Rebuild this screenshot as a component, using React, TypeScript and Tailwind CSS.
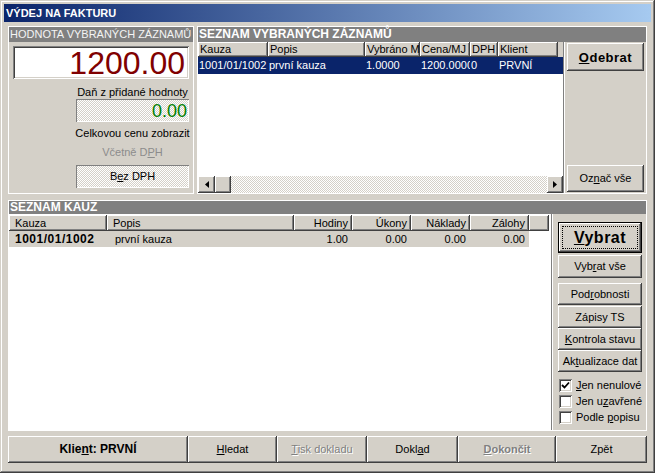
import React from 'react';

const RAISED = 'shadow-[inset_-1px_-1px_#404040,inset_1px_1px_#ffffff,inset_-2px_-2px_#808080,inset_2px_2px_#d4d0c8]';
const HEADCELL = 'shadow-[inset_-1px_-1px_#404040,inset_1px_1px_#ffffff,inset_-2px_-2px_#808080]';
const SUNKEN = 'shadow-[inset_1px_1px_#808080,inset_-1px_-1px_#ffffff,inset_2px_2px_#404040,inset_-2px_-2px_#d4d0c8]';
const THIN_SUNKEN = 'shadow-[inset_1px_1px_#808080,inset_-1px_-1px_#ffffff]';
const DITHER = 'bg-[image:repeating-conic-gradient(#ffffff_0_25%,#d4d0c8_0_50%)] bg-[length:2px_2px] bg-size-[2px_2px]';
const DISABLED = 'text-[#808080] [text-shadow:1px_1px_#ffffff]';

// top list (Seznam vybraných záznamů)
const SELECTED_COLS = [
  { label: 'Kauza', w: 'w-[70px]', value: '1001/01/1002' },
  { label: 'Popis', w: 'w-[97px]', value: 'první kauza' },
  { label: 'Vybráno MJ', w: 'w-[55px]', value: '1.0000' },
  { label: 'Cena/MJ', w: 'w-[50px]', value: '1200.0000' },
  { label: 'DPH', w: 'w-[28px]', value: '0' },
  { label: 'Klient', w: 'w-[60px]', value: 'PRVNÍ' },
];

// bottom list (Seznam kauz)
const KAUZY_COLS = [
  { label: 'Kauza', w: 'w-[98px]', right: false },
  { label: 'Popis', w: 'w-[187px]', right: false },
  { label: 'Hodiny', w: 'w-[58px]', right: true },
  { label: 'Úkony', w: 'w-[59px]', right: true },
  { label: 'Náklady', w: 'w-[59px]', right: true },
  { label: 'Zálohy', w: 'w-[59px]', right: true },
];

const Btn: React.FC<{ className?: string; children: React.ReactNode }> = ({ className = '', children }) => (
  <div className={`shrink-0 flex items-center justify-center whitespace-nowrap bg-[#d4d0c8] ${RAISED} ${className}`}>{children}</div>
);

const Arrow: React.FC<{ dir: 'left' | 'right' }> = ({ dir }) => (
  <svg width="4" height="7" viewBox="0 0 4 7">
    {dir === 'left' ? <path d="M4 0 L0 3.5 L4 7 Z" fill="#000" /> : <path d="M0 0 L4 3.5 L0 7 Z" fill="#000" />}
  </svg>
);

const Check: React.FC<{ checked?: boolean; label: React.ReactNode }> = ({ checked, label }) => (
  <div className="flex items-center h-[16px] gap-[4px] pl-[1px] whitespace-nowrap">
    <div className={`shrink-0 w-[13px] h-[13px] bg-white flex items-center justify-center ${SUNKEN}`}>
      {checked && (
        <svg width="9" height="9" viewBox="0 0 9 9">
          <path d="M1 4 L3.5 6.5 L8 1.5" fill="none" stroke="#000" strokeWidth="1.8" />
        </svg>
      )}
    </div>
    <span>{label}</span>
  </div>
);

export default function App() {
  return (
    <div className="w-[655px] h-[473px] bg-[#d4d0c8] p-1 flex flex-col text-[11px] leading-[13px] text-black font-['Liberation_Sans',Arial,sans-serif] shadow-[inset_-1px_-1px_#404040,inset_1px_1px_#d4d0c8,inset_-2px_-2px_#808080,inset_2px_2px_#ffffff] overflow-hidden">
      {/* Title bar */}
      <div className="shrink-0 h-[18px] flex items-center pl-[2px] bg-[linear-gradient(to_right,#0a246a,#a6caf0)] text-white font-bold text-[11px]">
        VÝDEJ NA FAKTURU
      </div>

      <div className="flex-1 px-1 pt-1 flex flex-col">
        {/* Top section */}
        <div className="shrink-0 h-[168px] flex gap-[3px]">
          {/* Hodnota vybraných záznamů */}
          <div className="w-[186px] border border-white flex flex-col overflow-hidden">
            <div className="shrink-0 h-[15px] bg-[#808080] text-[#f4f4f4] pl-[1px] flex items-center whitespace-nowrap overflow-hidden">
              HODNOTA VYBRANÝCH ZÁZNAMŮ
            </div>
            <div className="px-[4px] flex flex-col">
              <div className={`shrink-0 mt-[4px] h-[33px] bg-white flex items-center justify-end pr-[4px] text-[32px] leading-none text-[#800000] ${SUNKEN}`}>
                1200.00
              </div>
              <div className="w-[113px] ml-auto flex flex-col items-center whitespace-nowrap">
                <div className="mt-[7px]">Daň z přidané hodnoty</div>
                <div className={`shrink-0 w-full h-[23px] flex items-center justify-end pr-[2px] text-[18px] leading-none text-[#008000] ${DITHER} ${THIN_SUNKEN}`}>
                  0.00
                </div>
                <div className="mt-[5px]">Celkovou cenu zobrazit</div>
                <div className="mt-[6px] text-[#8c8c8c]">Včetně D<u>P</u>H</div>
                <div className={`shrink-0 mt-[6px] w-full h-[23px] flex items-center justify-center ${DITHER} ${THIN_SUNKEN}`}>
                  B<u>e</u>z DPH
                </div>
              </div>
            </div>
          </div>

          {/* Seznam vybraných záznamů */}
          <div className="flex-1 border border-white flex flex-col">
            <div className="shrink-0 h-[15px] bg-[#808080] text-white font-bold text-[12px] pl-[1px] flex items-center whitespace-nowrap">
              SEZNAM VYBRANÝCH ZÁZNAMŮ
            </div>
            <div className="flex-1 flex">
              <div className="w-[365px] bg-white flex flex-col">
                <div className="shrink-0 h-[15px] flex bg-[#d4d0c8]">
                  {SELECTED_COLS.map((c) => (
                    <div key={c.label} className={`${c.w} ${HEADCELL} pl-[2px] flex items-center whitespace-nowrap overflow-hidden`}>
                      {c.label}
                    </div>
                  ))}
                </div>
                <div className="shrink-0 h-[17px] flex bg-[#0a246a] text-white">
                  {SELECTED_COLS.map((c) => (
                    <div key={c.label} className={`${c.w} pl-[1px] flex items-center whitespace-nowrap overflow-hidden`}>
                      {c.value}
                    </div>
                  ))}
                </div>
                <div className="flex-1" />
                <div className={`shrink-0 h-[17px] flex ${DITHER}`}>
                  <Btn className="w-[17px]"><Arrow dir="left" /></Btn>
                  <Btn className="w-[16px]">{null}</Btn>
                  <div className="flex-1" />
                  <Btn className="w-[16px]"><Arrow dir="right" /></Btn>
                </div>
              </div>
              <div className="w-[2px] border-l border-[#808080] border-r border-r-white" />
              <div className="flex-1 px-[2px] pt-[1px] pb-[1px] flex flex-col justify-between">
                <Btn className="h-[28px] font-bold text-[13px] tracking-[0.5px]">
                  <span><u>O</u>debrat</span>
                </Btn>
                <Btn className="h-[27px]">
                  <span>Oz<u>n</u>ač vše</span>
                </Btn>
              </div>
            </div>
          </div>
        </div>

        {/* Seznam kauz */}
        <div className="shrink-0 mt-[6px] h-[231px] border border-white flex flex-col">
          <div className="shrink-0 h-[13px] bg-[#808080] text-white font-bold text-[12px] pl-[1px] flex items-center">
            SEZNAM KAUZ
          </div>
          <div className="flex-1 flex">
            <div className="w-[542px] bg-white pt-[1px] flex flex-col">
              <div className="shrink-0 h-[16px] flex bg-white">
                {KAUZY_COLS.map((c) => (
                  <div key={c.label} className={`${c.w} ${HEADCELL} bg-[#d4d0c8] flex items-center ${c.right ? 'justify-end pr-[4px]' : 'pl-[6px]'}`}>
                    {c.label}
                  </div>
                ))}
                <div className={`w-[20px] ${HEADCELL} bg-[#d4d0c8]`} />
              </div>
              <div className="shrink-0 h-[16px] w-[520px] flex bg-[#d4d0c8]">
                <div className="w-[98px] pl-[6px] flex items-center font-bold text-[12px] tracking-[0.5px]">1001/01/1002</div>
                <div className="w-[187px] pl-[8px] flex items-center">první kauza</div>
                <div className="w-[58px] pr-[4px] flex items-center justify-end">1.00</div>
                <div className="w-[59px] pr-[4px] flex items-center justify-end">0.00</div>
                <div className="w-[59px] pr-[4px] flex items-center justify-end">0.00</div>
                <div className="w-[59px] pr-[4px] flex items-center justify-end">0.00</div>
              </div>
            </div>
            <div className="w-[2px] border-l border-[#808080] border-r border-r-white" />
            <div className="flex-1 pl-[5px] pt-[8px] flex flex-col">
              <div className="w-[84px] flex flex-col">
                <div className={`relative shrink-0 h-[31px] border border-black flex items-center justify-center bg-[#d4d0c8] ${RAISED} font-bold text-[16px] tracking-[0.5px]`}>
                  <span><u>V</u>ybrat</span>
                  <div className="absolute inset-[3px] border border-dotted border-black" />
                </div>
                <Btn className="mt-[2px] h-[23px]"><span>Vyb<u>r</u>at vše</span></Btn>
                <Btn className="mt-[5px] h-[22px]"><span>Pod<u>r</u>obnosti</span></Btn>
                <Btn className="mt-[1px] h-[22px]"><span>Zápisy TS</span></Btn>
                <Btn className="h-[22px]"><span><u>K</u>ontrola stavu</span></Btn>
                <Btn className="h-[22px]"><span>Ak<u>t</u>ualizace dat</span></Btn>
                <div className="mt-[5px] flex flex-col">
                  <Check checked label={<><u>J</u>en nenulové</>} />
                  <Check label={<>Jen u<u>z</u>avřené</>} />
                  <Check label={<>Podle <u>p</u>opisu</>} />
                </div>
              </div>
            </div>
          </div>
        </div>

        {/* Bottom button bar */}
        <div className="shrink-0 mt-[5px] h-[27px] flex">
          <Btn className="w-[180px] font-bold text-[12px]"><span>Klie<u>n</u>t: PRVNÍ</span></Btn>
          <Btn className="w-[89px]"><span><u>H</u>ledat</span></Btn>
          <Btn className={`w-[90px] ${DISABLED}`}><span><u>T</u>isk dokladu</span></Btn>
          <Btn className="w-[91px]"><span>Dokl<u>a</u>d</span></Btn>
          <Btn className={`w-[98px] font-bold ${DISABLED}`}><span><u>D</u>okončit</span></Btn>
          <Btn className="w-[91px]"><span>Zpět</span></Btn>
        </div>
      </div>
    </div>
  );
}
